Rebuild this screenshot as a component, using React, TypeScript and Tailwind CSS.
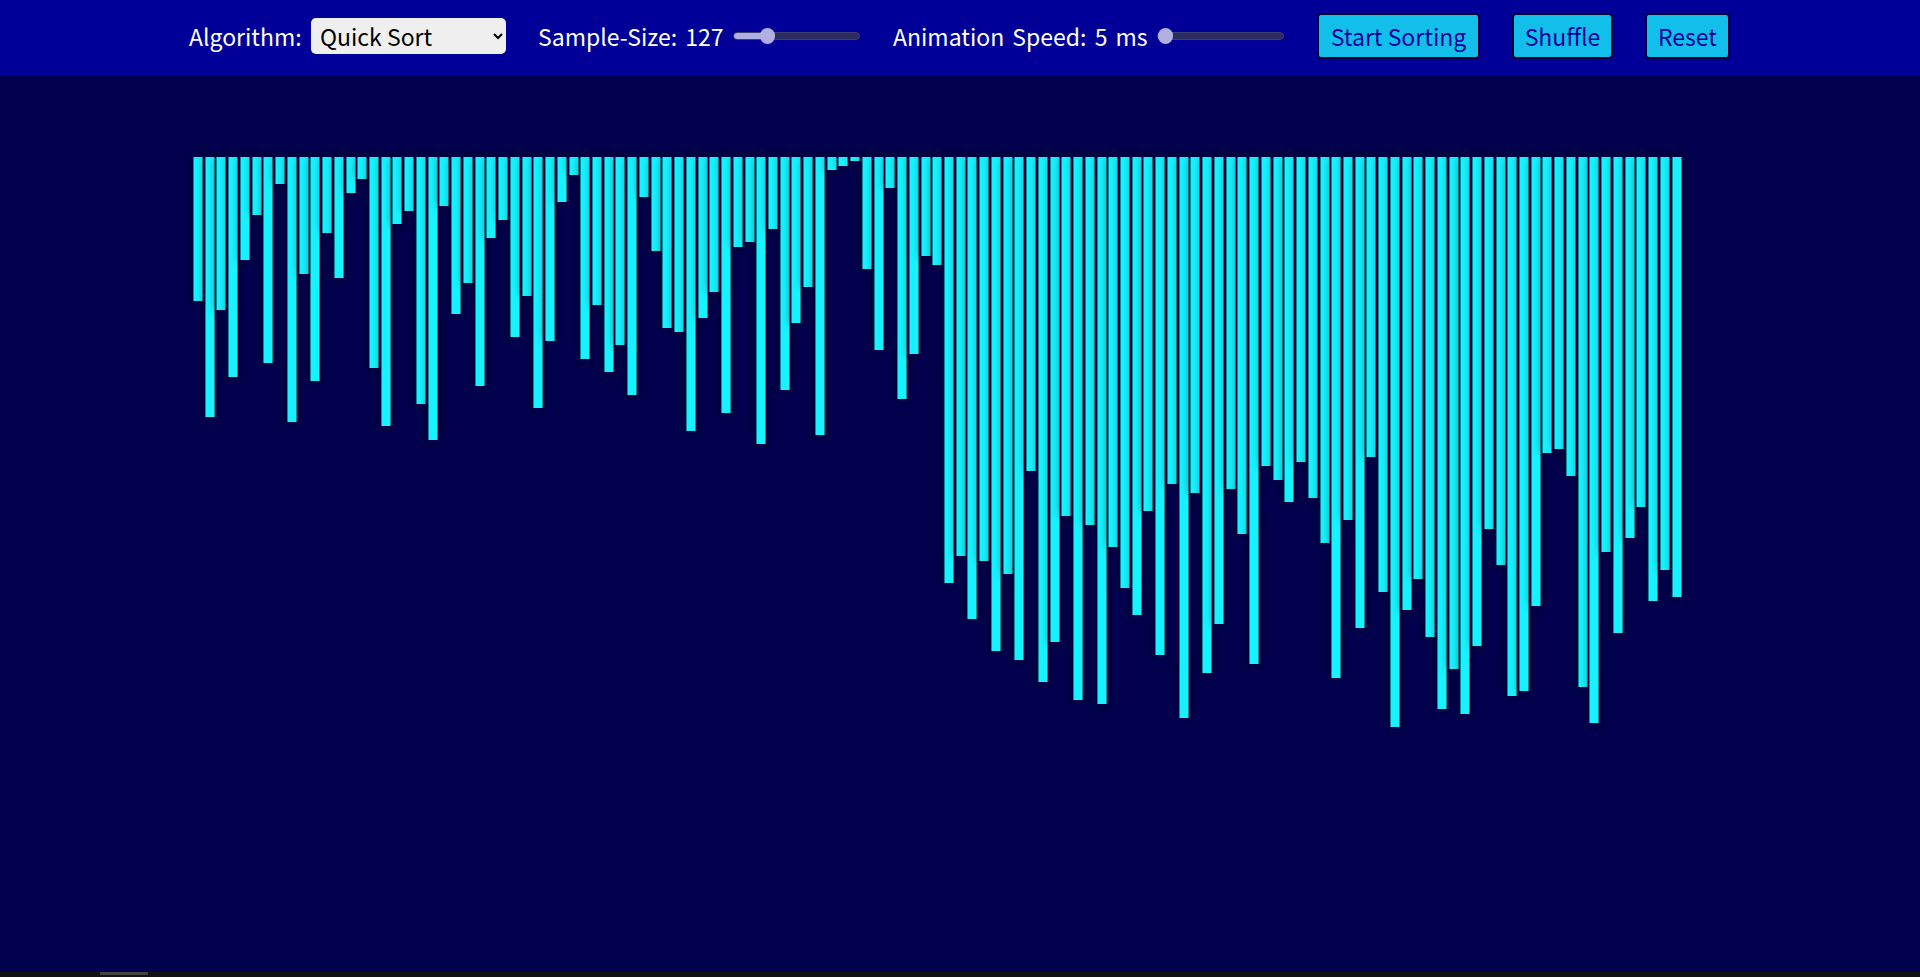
import { useState } from "react";

const HEIGHTS = [
  144, 260, 153, 220, 103, 58, 206, 27, 265, 117, 224, 76, 121, 36, 22, 211, 269, 67, 54, 247, 283, 49, 157, 126, 229,
  81, 63, 180, 139, 251, 184, 45, 18, 202, 148, 215, 188, 238, 40, 94, 171, 175, 274, 161, 135, 256, 90, 85, 287, 72,
  233, 166, 130, 278, 13, 9, 4, 112, 193, 31, 242, 197, 99, 108, 426, 399, 462, 404, 494, 417, 503, 314, 525, 485, 359,
  543, 368, 547, 390, 431, 458, 354, 498, 327, 561, 336, 516, 467, 332, 377, 507, 309, 323, 345, 305, 341, 386, 521,
  363, 471, 300, 435, 570, 453, 422, 480, 552, 512, 557, 489, 372, 408, 539, 534, 449, 296, 292, 319, 530, 566, 395,
  476, 381, 350, 444, 413, 440,
];

function Slider({
  min,
  max,
  value,
  onChange,
}: {
  min: number;
  max: number;
  value: number;
  onChange: (v: number) => void;
}) {
  // fill stops under the middle of the 15px thumb
  const fill = ((7.5 + ((value - min) / (max - min)) * 112) / 127) * 100;
  return (
    <input
      type="range"
      min={min}
      max={max}
      value={value}
      onChange={(e) => onChange(Number(e.target.value))}
      style={{ background: `linear-gradient(to right, #b0b0e0 ${fill}%, #2c2c5e ${fill}%)` }}
      className="h-[8px] w-[127px] cursor-pointer appearance-none rounded-full border border-[#3c3c70] [&::-webkit-slider-thumb]:h-[16px] [&::-webkit-slider-thumb]:w-[15px] [&::-webkit-slider-thumb]:appearance-none [&::-webkit-slider-thumb]:rounded-full [&::-webkit-slider-thumb]:bg-[#b0b0e0]"
    />
  );
}

function NavButton({ label, width }: { label: string; width: string }) {
  return (
    <button
      type="button"
      className={
        "flex h-[46px] items-center justify-center rounded-[4px] border-2 border-[#000033] bg-[#12bfea] text-[#000099] " +
        width
      }
    >
      {label}
    </button>
  );
}

export default function App() {
  const [size, setSize] = useState(127);
  const [speed, setSpeed] = useState(5);

  return (
    <div className="flex h-screen flex-col overflow-hidden bg-[#00004d] font-['Noto_Sans_CJK_KR','Noto_Sans',sans-serif] text-[23px] leading-none [word-spacing:3px]">
      <nav className="flex h-[75px] shrink-0 items-center whitespace-nowrap bg-[#000099] pb-[3px] pl-[189px] text-white">
        <span className="w-[113px]">Algorithm:</span>
        <select className="ml-[9px] h-[36px] w-[195px] rounded-[5px] bg-[#efefef] pl-[5px] text-black">
          <option>Quick Sort</option>
          <option>Merge Sort</option>
          <option>Heap Sort</option>
          <option>Bubble Sort</option>
        </select>
        <span className="ml-[32px] w-[184px]">Sample-Size: {size}</span>
        <div className="ml-[11px] flex items-center">
          <Slider min={10} max={500} value={size} onChange={setSize} />
        </div>
        <span className="ml-[33px] w-[254px]">Animation Speed: {speed} ms</span>
        <div className="ml-[10px] flex items-center">
          <Slider min={5} max={200} value={speed} onChange={setSpeed} />
        </div>
        <div className="ml-[33px] flex items-center gap-[32px]">
          <NavButton label="Start Sorting" width="w-[163px]" />
          <NavButton label="Shuffle" width="w-[101px]" />
          <NavButton label="Reset" width="w-[85px]" />
        </div>
      </nav>

      <main className="flex flex-1 items-start pl-[193px] pt-[82px]">
        {HEIGHTS.map((h, i) => (
          <div
            key={i}
            style={{ height: h }}
            className="mr-[1.735px] w-[10px] shrink-0 border-x border-[#0b8a9c] bg-[#16f2ff] shadow-[0_0_8px_rgba(0,0,0,0.5)]"
          />
        ))}
      </main>

      <div className="h-[5px] shrink-0 bg-[#111111]">
        <div className="ml-[100px] h-[3px] w-[48px] bg-[#444444]" />
      </div>
    </div>
  );
}
